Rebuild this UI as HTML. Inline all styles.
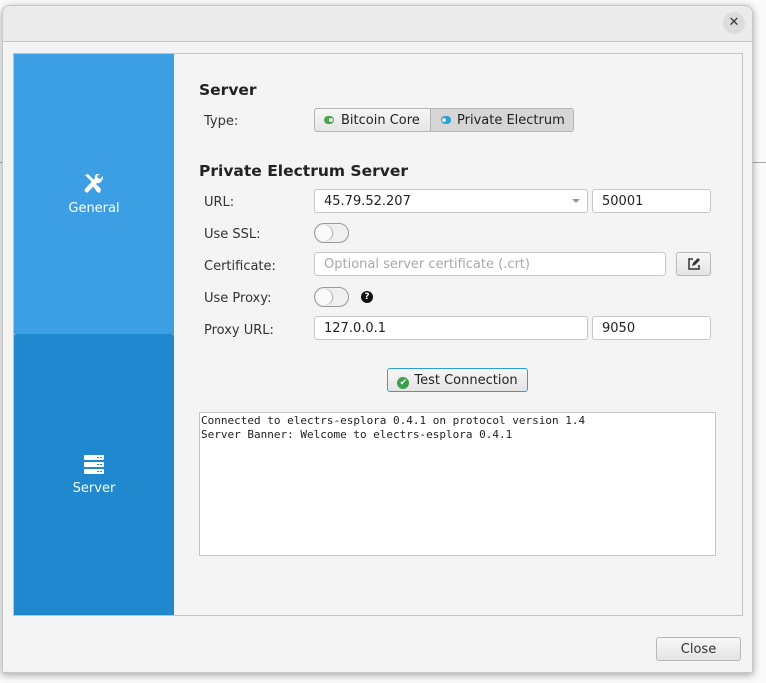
<!DOCTYPE html>
<html><head><style>
*{box-sizing:border-box;margin:0;padding:0}
body{width:766px;height:683px;background:#fafafa;position:relative;font-family:"DejaVu Sans",sans-serif;font-size:13px;color:#222;overflow:hidden}
.a{position:absolute}
.dlg{left:2px;top:5px;width:751px;height:668px;background:#f4f4f4;border:1px solid #c8c8c8;border-radius:8px 8px 0 0;box-shadow:0 2px 8px rgba(0,0,0,.35);overflow:hidden}
.hdr{left:0;top:0;width:100%;height:36px;background:#ebebeb;border-bottom:1px solid #c4c4c4}
.x{left:720px;top:6px;width:22px;height:22px;border-radius:11px;background:#dcdcdc;text-align:center;line-height:22px;font-size:13px;color:#333}
.inp{background:#fff;border:1px solid #c8c8c8;border-radius:3px;height:24px;line-height:24px;padding-left:9px;font-size:13px}
.lbl{left:204px;font-size:13px;color:#333}
.tg{width:35px;height:20px;border:1px solid #999;border-radius:10px;background:#f0f0f0}
.tg::before{content:"";position:absolute;left:1px;top:1px;width:16px;height:16px;border-radius:8px;background:#fafafa;box-shadow:1px 0 1px #aaa}
.btn{border:1px solid #b8b8b8;border-radius:3px;background:linear-gradient(#f7f7f7,#e4e4e4);text-align:center}
</style></head><body>
<div class="a" style="left:0;top:162px;width:2px;height:1px;background:#aaa"></div>
<div class="a" style="left:753px;top:162px;width:13px;height:1px;background:#aaa"></div>
<div class="a dlg">
 <div class="a hdr"></div>
 <div class="a x">✕</div>
</div>
<div class="a" style="left:13px;top:53px;width:730px;height:563px;border:1px solid #c4c4c4;background:#f4f4f4"></div>
<div class="a" style="left:14px;top:54px;width:160px;height:280px;background:#3d9fe3"></div>
<div class="a" style="left:14px;top:334px;width:160px;height:281px;background:#1f88cf;border-radius:2px 2px 0 0"></div>
<svg class="a" style="left:83px;top:174px" width="22" height="20" viewBox="0 0 22 20"><g fill="#fff"><path d="M2 1l3-1 6 6-2 2-6-6z"/><path d="M8 9l2-2 8 8-1 4-3-1z" /><path d="M20 2l-3 3-2-1-1-2 3-2c-3-1-6 1-5 4L2 15c-1 1 0 3 1 3l1 1 10-10c3 1 6-2 6-7z"/></g></svg>
<div class="a" style="left:14px;top:201px;width:160px;text-align:center;color:#fff;font-size:13px">General</div>
<svg class="a" style="left:84px;top:455px" width="20" height="19" viewBox="0 0 20 19"><g fill="#fff"><rect x="0" y="0" width="20" height="5" rx="1"/><rect x="0" y="7" width="20" height="5" rx="1"/><rect x="0" y="14" width="20" height="5" rx="1"/></g><g fill="#1f88cf"><rect x="13" y="2" width="2" height="1"/><rect x="16" y="2" width="2" height="1"/><rect x="13" y="9" width="2" height="1"/><rect x="16" y="9" width="2" height="1"/><rect x="13" y="16" width="2" height="1"/><rect x="16" y="16" width="2" height="1"/></g></svg>
<div class="a" style="left:14px;top:481px;width:160px;text-align:center;color:#fff;font-size:13px">Server</div>

<div class="a" style="left:199px;top:81px;font-size:15.5px;font-weight:bold;color:#222">Server</div>
<div class="a lbl" style="top:114px">Type:</div>
<div class="a" style="left:314px;top:108px;width:260px;height:24px;border:1px solid #b4b4b4;border-radius:3px;background:linear-gradient(#f6f6f6,#e6e6e6);overflow:hidden">
 <div class="a" style="left:115px;top:0;width:145px;height:22px;background:#d6d6d6;border-left:1px solid #b4b4b4"></div>
 <div class="a" style="left:9px;top:7px;width:10px;height:8px;border-radius:4px;background:#4ca64c"></div><div class="a" style="left:14px;top:9px;width:4px;height:4px;border-radius:2px;background:#e8e8e8"></div>
 <div class="a" style="left:26px;top:4px;font-size:13px">Bitcoin Core</div>
 <div class="a" style="left:126px;top:7px;width:10px;height:8px;border-radius:4px;background:#2b9fd6"></div><div class="a" style="left:127px;top:9px;width:4px;height:4px;border-radius:2px;background:#e8e8e8"></div>
 <div class="a" style="left:142px;top:4px;font-size:13px">Private Electrum</div>
</div>
<div class="a" style="left:199px;top:162px;font-size:15.5px;font-weight:bold;color:#222">Private Electrum Server</div>
<div class="a lbl" style="top:195px">URL:</div>
<div class="a inp" style="left:314px;top:189px;width:274px">45.79.52.207</div>
<div class="a" style="left:572px;top:199px;width:0;height:0;border-left:4px solid transparent;border-right:4px solid transparent;border-top:4px solid #999"></div>
<div class="a inp" style="left:592px;top:189px;width:119px">50001</div>
<div class="a lbl" style="top:227px">Use SSL:</div>
<div class="a tg" style="left:314px;top:223px"></div>
<div class="a lbl" style="top:259px">Certificate:</div>
<div class="a inp" style="left:314px;top:252px;width:352px;color:#a8a8a8">Optional server certificate (.crt)</div>
<div class="a btn" style="left:676px;top:252px;width:35px;height:24px"><svg width="14" height="14" viewBox="0 0 14 14" style="margin-top:4px"><path d="M6 2H2v10h10V8" fill="none" stroke="#333" stroke-width="1.5"/><path d="M5 9l1-3 5-5 2 2-5 5z" fill="#333"/></svg></div>
<div class="a lbl" style="top:291px">Use Proxy:</div>
<div class="a tg" style="left:314px;top:287px"></div>
<div class="a" style="left:361px;top:291px;width:12px;height:12px;border-radius:6px;background:#111;color:#fff;font-size:9px;font-weight:bold;text-align:center;line-height:12px">?</div>
<div class="a lbl" style="top:323px">Proxy URL:</div>
<div class="a inp" style="left:314px;top:316px;width:274px">127.0.0.1</div>
<div class="a inp" style="left:592px;top:316px;width:119px">9050</div>
<div class="a btn" style="left:387px;top:368px;width:141px;height:24px;border-color:#2da0d8;line-height:24px;font-size:13px"><span style="display:inline-block;width:12px;height:12px;border-radius:6px;background:#3aa04a;color:#fff;font-size:9px;line-height:12px;vertical-align:-1px;margin-right:5px">✔</span>Test Connection</div>
<div class="a" style="left:199px;top:412px;width:517px;height:144px;background:#fff;border:1px solid #c4c4c4;font-family:'DejaVu Sans Mono',monospace;font-size:11px;line-height:14px;padding:1px 0 0 1px;color:#222;white-space:pre">Connected to electrs-esplora 0.4.1 on protocol version 1.4
Server Banner: Welcome to electrs-esplora 0.4.1</div>
<div class="a btn" style="left:656px;top:637px;width:85px;height:24px;line-height:24px;font-size:13px;color:#333">Close</div>
</body></html>
